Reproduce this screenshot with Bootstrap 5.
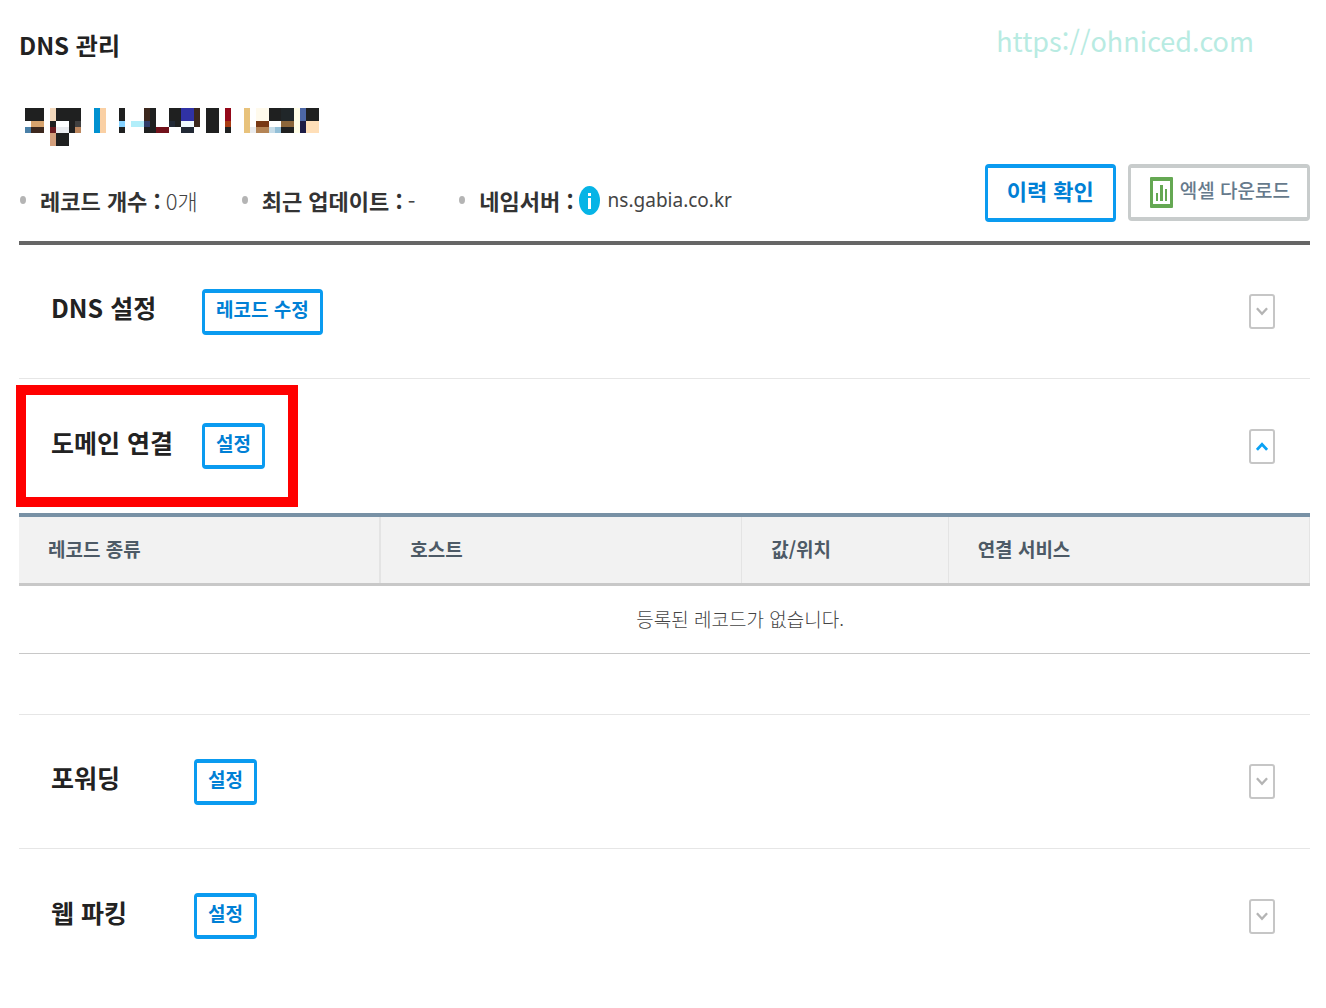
<!DOCTYPE html>
<html lang="ko">
<head>
<meta charset="utf-8">
<meta name="viewport" content="width=device-width, initial-scale=1">
<title>DNS 관리</title>
<link href="https://cdn.jsdelivr.net/npm/bootstrap@5.3.0/dist/css/bootstrap.min.css" rel="stylesheet">
<style>
  body { font-family: "Noto Sans CJK KR", sans-serif; color: #222; background: #fff; }
  .dns-page { padding: 20px 16px 24px 19px; }
  .page-title { font-size: 24px; line-height: 50px; }
  .site-link { font-size: 27px; line-height: 42px; color: #b8ebe2; margin-right: 56px; }
  .domain-mosaic { width: 294px; height: 38px; margin: 38px 0 18px 6px; }
  .stats-bar { border-bottom: 4px solid #666; padding-bottom: 19px; }
  .stat-list { font-size: 22px; line-height: 34px; color: #333; gap: 43px; padding-top: 14px; }
  .stat-item { display: flex; align-items: center; }
  .stat-item::before { content: ""; width: 6px; height: 8px; border-radius: 50%; background: #b4b4b4; margin: 0 14px 0 1px; }
  .stat-item dd { color: #444; margin: 0 0 0 5px; }
  .stat-item .server-name { font-family: "Noto Sans", sans-serif; font-size: 19px; }
  .info-icon { width: 21px; height: 29px; }
  .btn-box { background: #fff; border: solid #0a9bf0; border-width: 4px 3px; border-radius: 4px; color: #0080d5; font-weight: 700; font-size: 19px; line-height: 32px; padding: 0 11px 6px; }
  .btn-box:hover { background: #eef8ff; color: #0080d5; border-color: #0a9bf0; }
  .btn-history { font-size: 22px; line-height: 44px; padding: 0 19px 6px; }
  .btn-excel { border-color: #c8cccc; color: #667a8c; font-weight: 500; line-height: 43px; padding: 0 17px 6px 19px; gap: 7px; }
  .btn-excel svg { width: 23px; height: 31px; margin-top: 5px; }
  .dns-section { position: relative; min-height: 134px; padding: 0 35px 0 32px; }
  .ruled { border-bottom: 1px solid #e6e6e6; }
  .section-name { font-size: 25px; line-height: 36px; padding-bottom: 9px; width: 151px; }
  .section-name.narrow { width: 143px; }
  .toggle-btn { width: 26px; height: 35px; border: 2px solid #c6c6c6; border-radius: 3px; background: #fff; padding: 0; color: #b4b4b4; }
  .toggle-btn[aria-expanded="true"] { color: #0aa2f5; }
  .toggle-btn svg { width: 12px; height: 11px; display: block; margin: auto; }
  .highlight { position: absolute; left: -3px; top: 6px; width: 282px; height: 122px; border: 10px solid #f00; pointer-events: none; }
  .record-table { table-layout: fixed; font-size: 19px; line-height: 28px; border-top: 4px solid #7891a5; margin-bottom: 60px; }
  .record-table th { background: #f2f2f2; color: #4d5a66; font-weight: 700; padding: 18px 29px 20px; border-bottom: 3px solid #c8c8c8; border-right: 1px solid #e4e4e4; }
  .record-table th:first-child { border-right-width: 2px; }
  .record-table td { color: #444; font-weight: 300; padding: 19px 16px 20px 13%; border-bottom: 1px solid #c8c8c8; }
  .w-28 { width: 28%; }
  .w-16 { width: 16%; }
</style>
</head>
<body>
<main class="dns-page">
  <header class="d-flex justify-content-between align-items-start">
    <h1 class="page-title fw-bold m-0">DNS 관리</h1>
    <a class="site-link text-decoration-none" href="#">https://ohniced.com</a>
  </header>

  <svg class="domain-mosaic d-block" viewBox="75 54 882 114" shape-rendering="crispEdges" role="img" aria-label="domain">
    <g fill="#1f2020">
      <path d="M75 54h57v39H75zM168 54h75v39h-75zM150 93h18v18h-18zM207 93h18v36h-18zM168 129h39v39h-39zM357 54h18v39h-18zM357 111h18v18h-18zM450 54h18v75h-18zM432 111h18v18h-18zM507 54h36v39h-36zM525 93h18v18h-18zM618 54h39v75h-39zM675 111h18v18h-18zM807 54h36v39h-36zM843 111h39v18h-39zM918 54h39v39h-39z"/>
    </g>
    <path fill="#d8a46e" d="M93 93h39v18H93z"/>
    <path fill="#4a80a8" d="M75 111h18v18H75z"/>
    <path fill="#3c281e" d="M93 111h39v18H93zM432 54h18v39h-18zM582 54h18v57h-18z"/>
    <path fill="#f2d8bc" d="M150 54h18v39h-18z"/>
    <path fill="#6b1c20" d="M150 111h18v18h-18z"/>
    <path fill="#e9ebee" d="M168 111h39v18h-39zM750 111h18v18h-18z"/>
    <path fill="#404040" d="M225 93h18v18h-18z"/>
    <path fill="#bc875f" d="M225 111h18v18h-18z"/>
    <path fill="#d39f7c" d="M150 129h18v39h-18z"/>
    <path fill="#0091d0" d="M282 54h18v75h-18z"/>
    <path fill="#fad0a4" d="M300 54h18v75h-18z"/>
    <path fill="#86d2ff" d="M357 93h18v18h-18z"/>
    <path fill="#b2eefa" d="M393 93h39v18h-39z"/>
    <path fill="#303d69" d="M432 93h18v18h-18z"/>
    <path fill="#72121b" d="M468 111h39v18h-39z"/>
    <path fill="#222935" d="M507 93h18v18h-18zM543 111h39v18h-39z"/>
    <path fill="#3032a5" d="M543 54h39v39h-39z"/>
    <path fill="#eff9ff" d="M543 93h39v18h-39z"/>
    <path fill="#940819" d="M675 54h18v39h-18z"/>
    <path fill="#a83b12" d="M675 93h18v18h-18z"/>
    <path fill="#e8c27b" d="M732 54h18v75h-18z"/>
    <path fill="#fffaec" d="M768 54h39v39h-39z"/>
    <path fill="#783915" d="M768 93h39v18h-39z"/>
    <path fill="#b48455" d="M768 111h39v18h-39z"/>
    <path fill="#c6dce8" d="M807 111h18v18h-18z"/>
    <path fill="#94c0d8" d="M825 111h18v18h-18z"/>
    <path fill="#202629" d="M843 54h39v39h-39z"/>
    <path fill="#8c663a" d="M843 93h39v18h-39z"/>
    <path fill="#fffde7" d="M882 54h18v75h-18z"/>
    <path fill="#4d67a5" d="M900 54h18v39h-18z"/>
    <path fill="#1d1c45" d="M900 93h18v36h-18z"/>
    <path fill="#ffdfb8" d="M918 93h39v36h-39z"/>
  </svg>

  <div class="stats-bar d-flex justify-content-between align-items-start">
    <dl class="stat-list d-flex align-self-center m-0">
      <div class="stat-item"><dt>레코드 개수 :</dt><dd class="fw-light">0개</dd></div>
      <div class="stat-item"><dt>최근 업데이트 :</dt><dd>-</dd></div>
      <div class="stat-item"><dt>네임서버 :</dt>
        <dd class="d-flex align-items-center gap-2">
          <svg class="info-icon" viewBox="0 0 21 29" aria-hidden="true"><ellipse cx="10.500" cy="14.500" rx="10.500" ry="14.500" fill="#06b4e6"/><path fill="#fff" d="M9 7h3v3H9zM9 12h3v11H9z"/></svg>
          <span class="server-name">ns.gabia.co.kr</span>
        </dd>
      </div>
    </dl>
    <div class="d-flex align-items-start" style="gap:12px">
      <button type="button" class="btn btn-box btn-history">이력 확인</button>
      <button type="button" class="btn btn-box btn-excel d-flex align-items-center">
        <svg viewBox="0 0 23 31" aria-hidden="true"><rect width="23" height="31" rx="1" fill="#65a853"/><path fill="#fff" d="M3 4h17v23H3z"/><path fill="#65a853" d="M6 16h2v8H6zM10 8h3v16h-3zM15 12h2v12h-2z"/></svg>
        <span>엑셀 다운로드</span>
      </button>
    </div>
  </div>

  <section class="dns-section ruled d-flex align-items-center">
    <h2 class="section-name fw-bold m-0">DNS 설정</h2>
    <button type="button" class="btn btn-box">레코드 수정</button>
    <button type="button" class="toggle-btn ms-auto" aria-expanded="false" aria-label="DNS 설정 펼치기"><svg viewBox="0 0 13 11" fill="none" stroke="currentColor" stroke-width="2.500"><path d="M1 2l5.500 6L12 2"/></svg></button>
  </section>

  <section>
    <div class="dns-section d-flex align-items-center">
      <h2 class="section-name fw-bold m-0">도메인 연결</h2>
      <button type="button" class="btn btn-box">설정</button>
      <button type="button" class="toggle-btn ms-auto" aria-expanded="true" aria-label="도메인 연결 접기"><svg viewBox="0 0 13 11" fill="none" stroke="currentColor" stroke-width="3"><path d="M1 9l5.500-6L12 9"/></svg></button>
      <div class="highlight"></div>
    </div>
    <div class="ruled">
      <table class="record-table w-100">
        <thead>
          <tr><th class="w-28" scope="col">레코드 종류</th><th class="w-28" scope="col">호스트</th><th class="w-16" scope="col">값/위치</th><th class="w-28" scope="col">연결 서비스</th></tr>
        </thead>
        <tbody>
          <tr><td colspan="4" class="text-center">등록된 레코드가 없습니다.</td></tr>
        </tbody>
      </table>
    </div>
  </section>

  <section class="dns-section ruled d-flex align-items-center">
    <h2 class="section-name narrow fw-bold m-0">포워딩</h2>
    <button type="button" class="btn btn-box">설정</button>
    <button type="button" class="toggle-btn ms-auto" aria-expanded="false" aria-label="포워딩 펼치기"><svg viewBox="0 0 13 11" fill="none" stroke="currentColor" stroke-width="2.500"><path d="M1 2l5.500 6L12 2"/></svg></button>
  </section>

  <section class="dns-section d-flex align-items-center">
    <h2 class="section-name narrow fw-bold m-0">웹 파킹</h2>
    <button type="button" class="btn btn-box">설정</button>
    <button type="button" class="toggle-btn ms-auto" aria-expanded="false" aria-label="웹 파킹 펼치기"><svg viewBox="0 0 13 11" fill="none" stroke="currentColor" stroke-width="2.500"><path d="M1 2l5.500 6L12 2"/></svg></button>
  </section>
</main>
<script src="https://cdn.jsdelivr.net/npm/bootstrap@5.3.0/dist/js/bootstrap.bundle.min.js"></script>
</body>
</html>
